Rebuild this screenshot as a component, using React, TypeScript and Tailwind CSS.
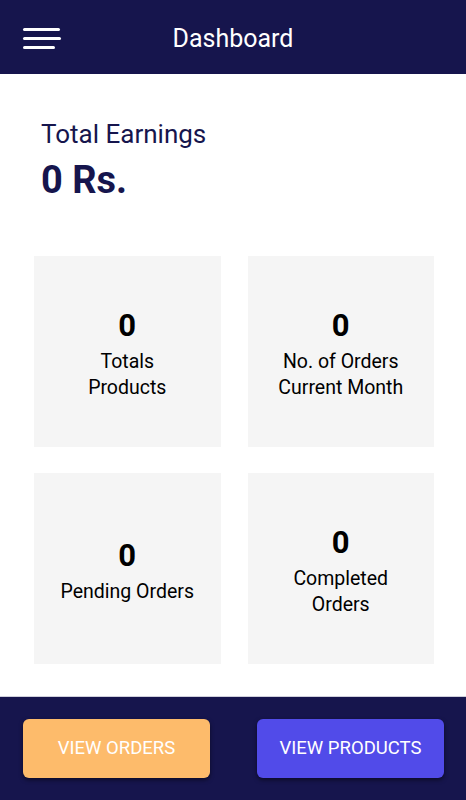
import React from "react";

type Stat = { value: string; lines: string[] };

const stats: Stat[] = [
  { value: "0", lines: ["Totals", "Products"] },
  { value: "0", lines: ["No. of Orders", "Current Month"] },
  { value: "0", lines: ["Pending Orders"] },
  { value: "0", lines: ["Completed", "Orders"] },
];

const StatCard: React.FC<{ stat: Stat }> = ({ stat }) => (
  <div className="flex h-[191px] flex-col items-center justify-center bg-[#f5f5f5] pt-[3px] text-center text-black">
    <div className="mb-[2px] text-[31px] font-bold leading-[42px]">{stat.value}</div>
    {stat.lines.map((l) => (
      <div key={l} className="text-[19.5px] leading-[26px]">
        {l}
      </div>
    ))}
  </div>
);

export default function App() {
  return (
    <div className="flex h-[800px] w-[466px] flex-col bg-white font-['Roboto',sans-serif]">
      <header className="relative flex h-[74px] items-center justify-center bg-[#16154d]">
        <div className="absolute left-[23px] top-[28px] flex flex-col gap-[6px]">
          <span className="block h-[3px] w-[37px] rounded bg-white" />
          <span className="block h-[3px] w-[38px] rounded bg-white" />
          <span className="block h-[3px] w-[32px] rounded bg-white" />
        </div>
        <h1 className="mt-[4px] text-[25px] text-white">Dashboard</h1>
      </header>

      <main className="flex-1">
        <div className="px-[41px] pt-[45px] text-[#16154d]">
          <p className="text-[26px] leading-[30px]">Total Earnings</p>
          <p className="mt-[9px] text-[38px] font-bold leading-[44px]">0 Rs.</p>
        </div>

        <div className="mt-[54px] grid grid-cols-2 gap-x-[27px] gap-y-[26px] px-[34px] pr-[32px]">
          {stats.map((s, i) => (
            <StatCard key={i} stat={s} />
          ))}
        </div>
      </main>

      <footer className="flex h-[104px] items-center justify-between border-t border-[#d0d0dc] bg-[#16154d] px-[23px] pr-[22px]">
        <button className="h-[59px] w-[187px] rounded-[6px] bg-[#fdbb6b] text-[18.5px] text-white shadow-[0_2px_4px_rgba(0,0,0,0.5)]">
          VIEW ORDERS
        </button>
        <button className="h-[59px] w-[187px] rounded-[6px] bg-[#514be9] text-[18.5px] text-white shadow-[0_2px_4px_rgba(0,0,0,0.5)]">
          VIEW PRODUCTS
        </button>
      </footer>
    </div>
  );
}
